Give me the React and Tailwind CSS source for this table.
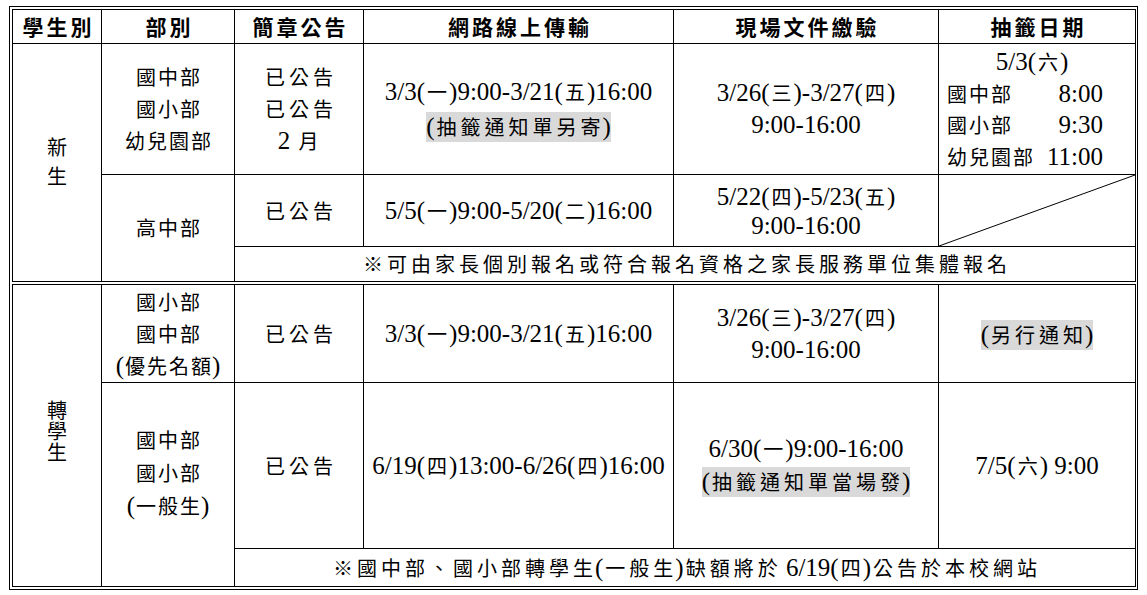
import React from "react";

const RE = /[\u2E80-\u9FFF\u3000-\u303F\uFF00-\uFFEF\u203B]/;
const DEF = "inline-block w-[24px] text-center text-[20px] leading-[20px]";
const NARROW = "inline-block w-[22px] text-center text-[20px] leading-[20px]";
const HEAD = "inline-block w-[24px] text-center text-[21px] leading-[20px] font-bold";

function T({ s, c = DEF }) {
  return [...s].map((ch, i) =>
    RE.test(ch) ? (
      <span key={i} className={c}>
        {ch}
      </span>
    ) : (
      <React.Fragment key={i}>{ch}</React.Fragment>
    )
  );
}

function Hl({ s }) {
  return (
    <span className="inline-block bg-[#d9d9d9] h-[30px] leading-[30px] align-middle">
      <T s={s} />
    </span>
  );
}

function Lines({ items, c, cls = "leading-[32px]" }) {
  return (
    <div className={cls}>
      {items.map((s, i) => (
        <div key={i}>{typeof s === "string" ? <T s={s} c={c} /> : s}</div>
      ))}
    </div>
  );
}

function Cols() {
  return (
    <colgroup>
      <col className="w-[89px]" />
      <col className="w-[133px]" />
      <col className="w-[129px]" />
      <col className="w-[310px]" />
      <col className="w-[265px]" />
      <col className="w-[197px]" />
    </colgroup>
  );
}

const td = "border border-black p-0 align-middle text-center";

function Stack({ chars, cls }) {
  return (
    <div className={"flex flex-col items-center " + cls}>
      {[...chars].map((ch, i) => (
        <span key={i} className="text-[20px]">
          {ch}
        </span>
      ))}
    </div>
  );
}

export default function App() {
  return (
    <div className="bg-white w-[1147px] h-[595px] pt-[6px] pl-[9px] font-['Liberation_Serif','Noto_Sans_CJK_TC',serif] text-[25px] text-black">
      <div className="w-[1129px] border border-black p-[2px] flex flex-col gap-[2px]">
        <table className="w-[1123px] table-fixed border-collapse">
          <Cols />
          <tbody>
            <tr className="h-[34px]">
              {["學生別", "部別", "簡章公告", "網路線上傳輸", "現場文件繳驗", "抽籤日期"].map((h) => (
                <th key={h} className={td + " leading-[30px]"}>
                  <T s={h} c={HEAD} />
                </th>
              ))}
            </tr>
            <tr className="h-[131px]">
              <td rowSpan={3} className={td}>
                <Stack chars="新生" cls="leading-[29px]" />
              </td>
              <td className={td}>
                <Lines items={["國中部", "國小部", "幼兒園部"]} c={NARROW} />
              </td>
              <td className={td}>
                <Lines items={["已公告", "已公告", "2 月"]} />
              </td>
              <td className={td}>
                <Lines items={["3/3(一)9:00-3/21(五)16:00", <Hl s="(抽籤通知單另寄)" />]} />
              </td>
              <td className={td}>
                <Lines items={["3/26(三)-3/27(四)", "9:00-16:00"]} />
              </td>
              <td className={td}>
                <div className="leading-[31.5px] text-left">
                  <div className="text-center pr-[10px]">
                    <T s="5/3(六)" />
                  </div>
                  {[
                    ["國中部", "8:00"],
                    ["國小部", "9:30"],
                    ["幼兒園部", "11:00"],
                  ].map(([a, b]) => (
                    <div key={a} className="ml-[7px] w-[157px] flex justify-between">
                      <span>
                        <T s={a} c={NARROW} />
                      </span>
                      <span>{b}</span>
                    </div>
                  ))}
                </div>
              </td>
            </tr>
            <tr className="h-[72px]">
              <td rowSpan={2} className={td}>
                <Lines items={["高中部"]} c={NARROW} />
              </td>
              <td className={td}>
                <Lines items={["已公告"]} />
              </td>
              <td className={td}>
                <Lines items={["5/5(一)9:00-5/20(二)16:00"]} />
              </td>
              <td className={td}>
                <Lines items={["5/22(四)-5/23(五)", "9:00-16:00"]} cls="leading-[29px]" />
              </td>
              <td className={td + " relative"}>
                <svg
                  className="absolute inset-0 w-full h-full"
                  viewBox="0 0 100 100"
                  preserveAspectRatio="none"
                >
                  <line x1="0" y1="100" x2="100" y2="0" stroke="black" strokeWidth="1" vectorEffect="non-scaling-stroke" />
                </svg>
              </td>
            </tr>
            <tr className="h-[35px]">
              <td colSpan={4} className={td + " leading-[30px]"}>
                <T s="※可由家長個別報名或符合報名資格之家長服務單位集體報名" />
              </td>
            </tr>
          </tbody>
        </table>
        <table className="w-[1123px] table-fixed border-collapse">
          <Cols />
          <tbody>
            <tr className="h-[98px]">
              <td rowSpan={3} className={td}>
                <Stack chars="轉學生" cls="leading-[21px] pb-[6px]" />
              </td>
              <td className={td}>
                <Lines items={["國小部", "國中部", "(優先名額)"]} c={NARROW} cls="leading-[32px]" />
              </td>
              <td className={td}>
                <Lines items={["已公告"]} />
              </td>
              <td className={td}>
                <Lines items={["3/3(一)9:00-3/21(五)16:00"]} />
              </td>
              <td className={td}>
                <Lines items={["3/26(三)-3/27(四)", "9:00-16:00"]} />
              </td>
              <td className={td}>
                <Lines items={[<Hl s="(另行通知)" />]} />
              </td>
            </tr>
            <tr className="h-[166px]">
              <td rowSpan={2} className={td}>
                <div className="pb-[24px]">
                  <Lines items={["國中部", "國小部", "(一般生)"]} c={NARROW} cls="leading-[33px]" />
                </div>
              </td>
              <td className={td}>
                <Lines items={["已公告"]} />
              </td>
              <td className={td}>
                <Lines items={["6/19(四)13:00-6/26(四)16:00"]} />
              </td>
              <td className={td}>
                <Lines items={["6/30(一)9:00-16:00", <Hl s="(抽籤通知單當場發)" />]} cls="leading-[30px]" />
              </td>
              <td className={td}>
                <Lines items={["7/5(六) 9:00"]} />
              </td>
            </tr>
            <tr className="h-[38px]">
              <td colSpan={4} className={td + " leading-[30px]"}>
                <T s="※國中部、國小部轉學生(一般生)缺額將於 6/19(四)公告於本校網站" />
              </td>
            </tr>
          </tbody>
        </table>
      </div>
    </div>
  );
}
